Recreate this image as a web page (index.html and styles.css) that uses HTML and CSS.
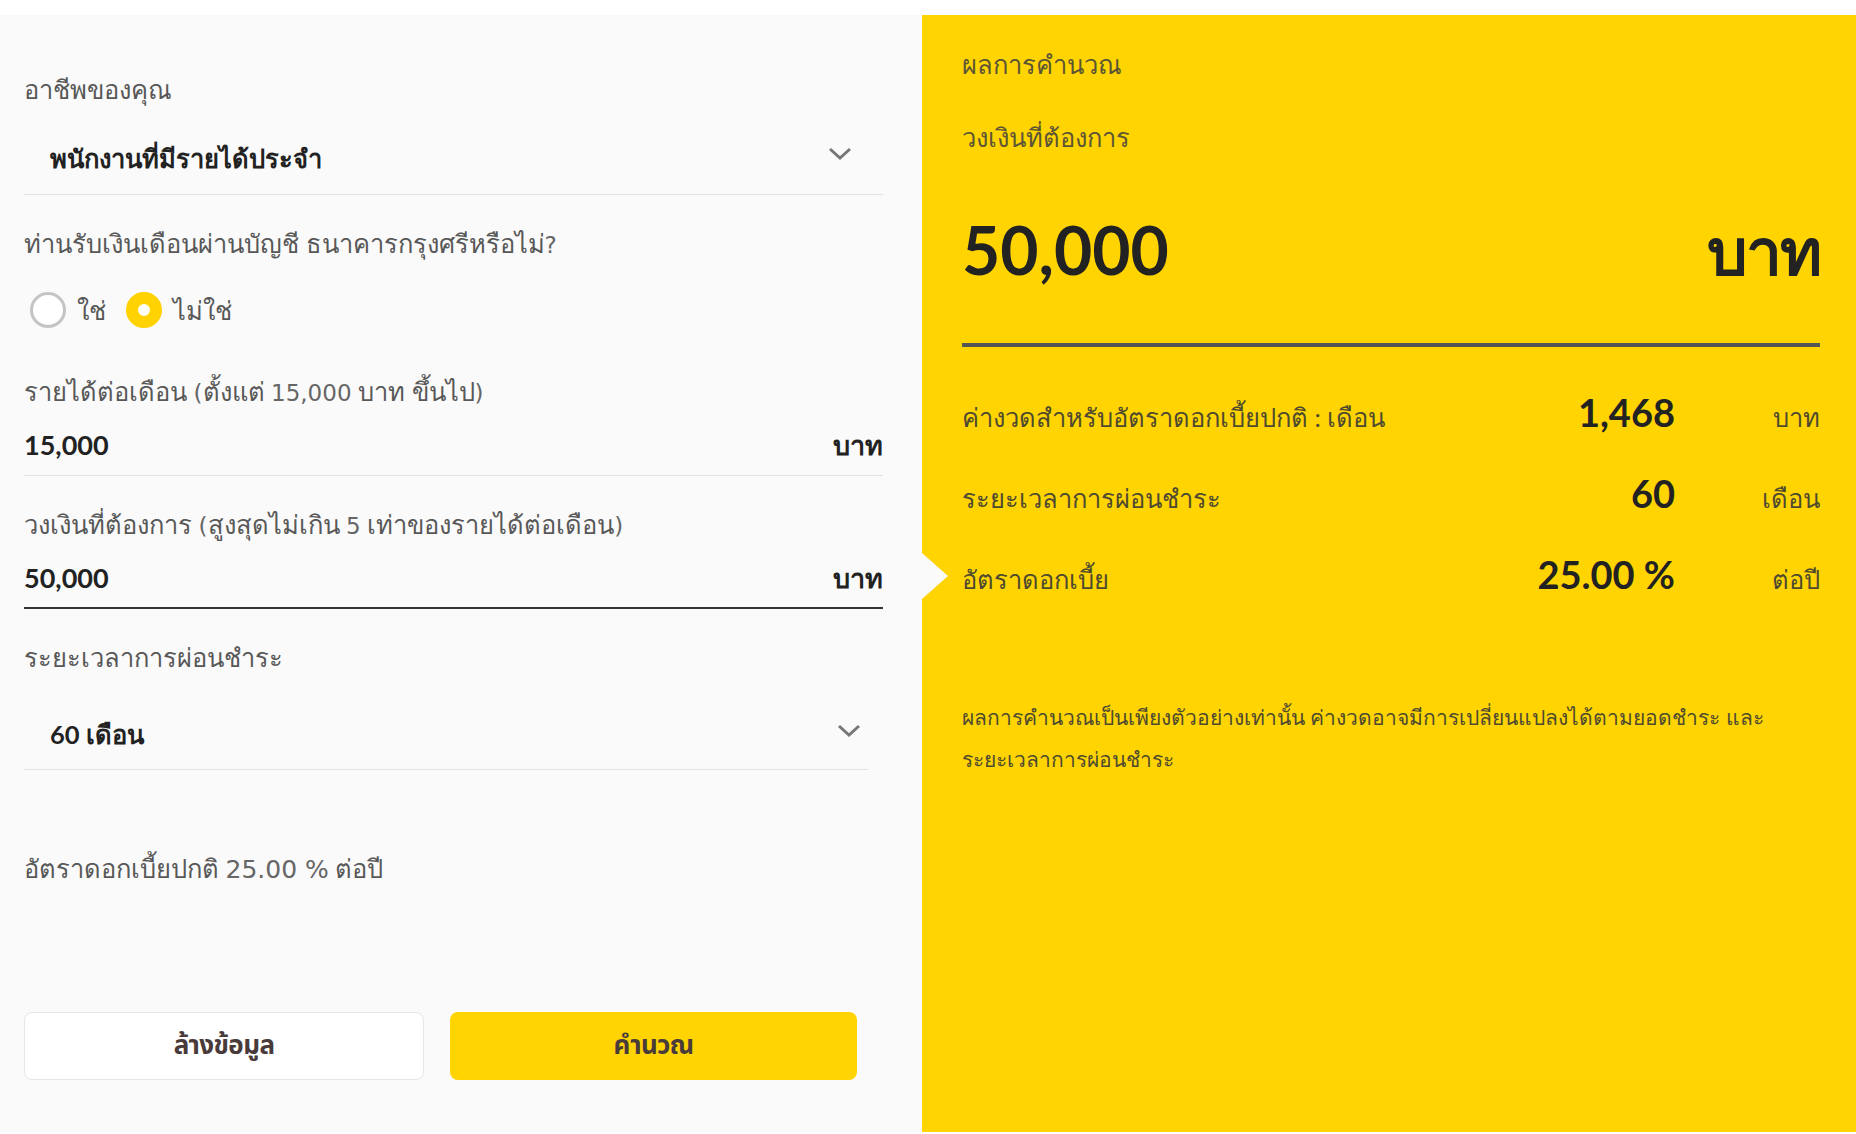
FILE: index.html
```html
<!DOCTYPE html>
<html lang="th">
<head>
<meta charset="utf-8">
<title>คำนวณสินเชื่อ</title>
<link rel="stylesheet" href="styles.css">
</head>
<body>
<div class="page">
  <section class="form">
    <div class="label l1">อาชีพของคุณ</div>
    <div class="select s1">
      <span class="select-value">พนักงานที่มีรายได้ประจำ</span>
      <svg class="chev" width="26" height="16" viewBox="0 0 26 16"><polyline points="3,3 13,12 23,3" fill="none" stroke="#777" stroke-width="3"/></svg>
    </div>
    <div class="label l2">ท่านรับเงินเดือนผ่านบัญชี ธนาคารกรุงศรีหรือไม่<span class="lat">?</span></div>
    <div class="radios">
      <label class="radio"><span class="dot"></span><span class="radio-text">ใช่</span></label>
      <label class="radio checked"><span class="dot"></span><span class="radio-text">ไม่ใช่</span></label>
    </div>
    <div class="label l3">รายได้ต่อเดือน <span class="lat">(</span>ตั้งแต่ <span class="lat">15,000</span> บาท ขึ้นไป<span class="lat">)</span></div>
    <div class="input i1"><span class="input-value">15,000</span><span class="input-unit">บาท</span></div>
    <div class="label l4">วงเงินที่ต้องการ <span class="lat">(</span>สูงสุดไม่เกิน <span class="lat">5</span> เท่าของรายได้ต่อเดือน<span class="lat">)</span></div>
    <div class="input i2 active"><span class="input-value">50,000</span><span class="input-unit">บาท</span></div>
    <div class="label l5">ระยะเวลาการผ่อนชำระ</div>
    <div class="select s2">
      <span class="select-value">60 เดือน</span>
      <svg class="chev" width="26" height="16" viewBox="0 0 26 16"><polyline points="3,3 13,12 23,3" fill="none" stroke="#777" stroke-width="3"/></svg>
    </div>
    <div class="label rate">อัตราดอกเบี้ยปกติ <span class="lat big-lat">25.00 %</span> ต่อปี</div>
    <div class="buttons">
      <button class="btn btn-clear">ล้างข้อมูล</button>
      <button class="btn btn-calc">คำนวณ</button>
    </div>
    <span class="notch"></span>
  </section>
  <section class="result">
    <div class="r-title">ผลการคำนวณ</div>
    <div class="r-sub">วงเงินที่ต้องการ</div>
    <div class="big">
      <span class="big-num">50,000</span>
      <span class="big-unit">บาท</span>
    </div>
    <div class="rows">
      <div class="row"><span class="row-label">ค่างวดสำหรับอัตราดอกเบี้ยปกติ : เดือน</span><span class="row-value">1,468</span><span class="row-unit">บาท</span></div>
      <div class="row"><span class="row-label">ระยะเวลาการผ่อนชำระ</span><span class="row-value">60</span><span class="row-unit">เดือน</span></div>
      <div class="row"><span class="row-label">อัตราดอกเบี้ย</span><span class="row-value">25.00 %</span><span class="row-unit">ต่อปี</span></div>
    </div>
    <p class="note">ผลการคำนวณเป็นเพียงตัวอย่างเท่านั้น ค่างวดอาจมีการเปลี่ยนแปลงได้ตามยอดชำระ และ<br>ระยะเวลาการผ่อนชำระ</p>
  </section>
</div>
</body>
</html>
```

FILE: styles.css
```css
* { box-sizing: border-box; }
html, body { margin: 0; padding: 0; background: #fff; }
body {
  font-family: Lato, "Noto Sans", sans-serif;
  color: #555;
  padding-top: 15px;
}
.page {
  display: flex;
  height: 1117px;
}
.form {
  position: relative;
  width: 922px;
  flex: none;
  background: #fafafa;
  padding: 58px 39px 0 24px;
  display: flex;
  flex-direction: column;
}
.label {
  font-size: 25.5px;
  line-height: 32px;
  height: 32px;
  color: #585858;
  white-space: nowrap;
}
.lat {
  font-family: "DejaVu Sans", sans-serif;
  font-size: 23px;
  line-height: 1;
  color: #666;
}
.big-lat { font-size: 25px; }
.l2, .l4, .l5 { margin-top: 32px; }
.l3 { margin-top: 47px; }
.select {
  display: flex;
  align-items: center;
  justify-content: space-between;
  border-bottom: 1px solid #e2e2e2;
  padding: 35px 30px 18px 26px;
}
.select .chev { margin-top: -8px; }
.select-value {
  font-size: 25.5px;
  line-height: 36px;
  font-weight: 700;
  color: #222;
}
.s2 { margin-right: 15px; padding: 43px 6px 17px 26px; }
.s2 .chev { margin-top: -6px; }
.radios {
  margin-top: 33px;
  display: flex;
  gap: 20px;
  height: 36px;
}
.radio {
  display: flex;
  align-items: center;
  gap: 11px;
  font-size: 25.5px;
  line-height: 36px;
  height: 36px;
  color: #585858;
}
.dot {
  width: 36px;
  height: 36px;
  border-radius: 50%;
  border: 3px solid #c4c4c4;
  background: #fff;
  margin-left: 6px;
}
.checked .dot {
  margin-left: 0;
  border: 12px solid #ffd200;
  background: #fff;
}
.input {
  display: flex;
  justify-content: space-between;
  align-items: center;
  margin-top: 20px;
  padding-bottom: 12px;
  border-bottom: 1px solid #e2e2e2;
}
.input-value, .input-unit {
  font-size: 27px;
  line-height: 36px;
  height: 36px;
  font-weight: 700;
  color: #222;
}
.i2 { padding-bottom: 11px; border-bottom: 2px solid #333; }
.rate { margin-top: 82px; }
.buttons {
  margin-top: 128px;
  display: flex;
  gap: 26px;
}
.btn {
  height: 68px;
  border-radius: 8px;
  font-family: "Noto Sans Thai", "Noto Sans", Lato, sans-serif;
  font-size: 26px;
  font-weight: 700;
  letter-spacing: -0.6px;
  color: #4a3b3b;
  cursor: pointer;
  padding: 0;
}
.btn-clear {
  width: 400px;
  background: #fff;
  border: 1px solid #e6e6e6;
}
.btn-calc {
  width: 407px;
  background: #ffd400;
  border: none;
}
.notch {
  position: absolute;
  right: -26px;
  top: 538px;
  width: 0;
  height: 0;
  border-top: 23px solid transparent;
  border-bottom: 23px solid transparent;
  border-left: 26px solid #fafafa;
  z-index: 2;
}
.result {
  flex: 1;
  background: #ffd400;
  padding: 33px 36px 0 40px;
  color: #555;
}
.r-title, .r-sub {
  font-size: 25.5px;
  line-height: 32px;
  color: #5c5535;
}
.r-sub { margin-top: 41px; }
.big {
  margin-top: 65px;
  display: flex;
  justify-content: space-between;
  align-items: baseline;
  padding-bottom: 60px;
  border-bottom: 4px solid #555;
}
.big-num, .big-unit {
  font-size: 66px;
  line-height: 64px;
  font-weight: 700;
  color: #222;
}
.big-unit { font-size: 64px; letter-spacing: -2px; }
.rows {
  margin-top: 42px;
  display: flex;
  flex-direction: column;
  gap: 41px;
}
.row {
  display: flex;
  align-items: baseline;
  height: 40px;
}
.row-label {
  flex: 1;
  font-size: 25.5px;
  color: #4e4a30;
}
.row-value {
  font-size: 38px;
  font-weight: 700;
  color: #222;
}
.row-unit {
  width: 145px;
  text-align: right;
  font-size: 25.5px;
  color: #4e4a30;
}
.note {
  margin: 105px 0 0;
  font-size: 21px;
  line-height: 42px;
  color: #4e4a30;
}
```
